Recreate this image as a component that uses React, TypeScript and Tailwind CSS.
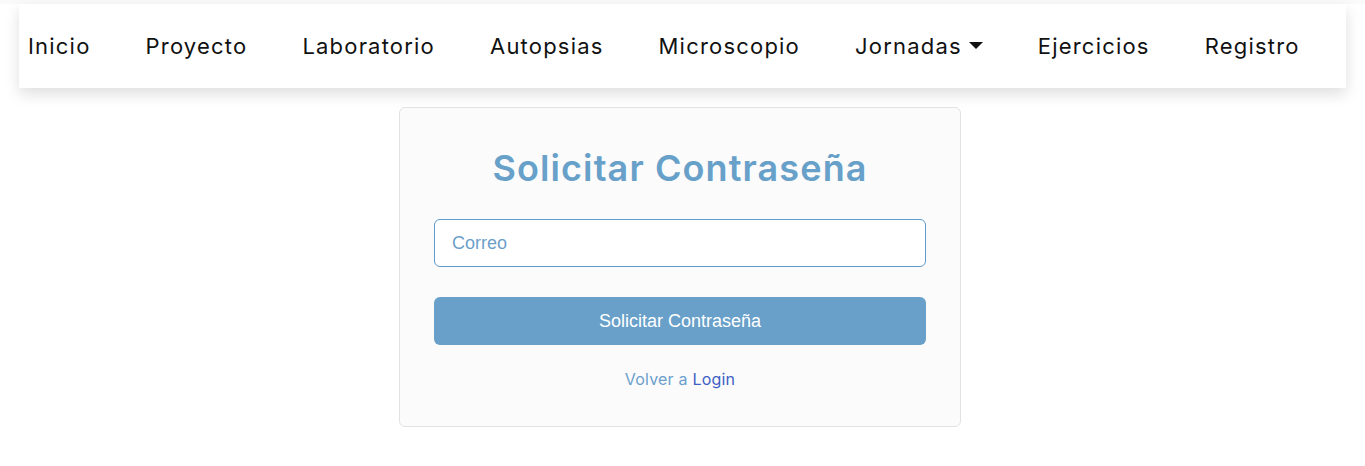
import React from "react";

const items = ["Inicio", "Proyecto", "Laboratorio", "Autopsias", "Microscopio", "Jornadas", "Ejercicios", "Registro"];

export default function App() {
  const poppins = { fontFamily: "Inter, 'Noto Sans', sans-serif" };
  return (
    <div className="min-h-[466px] w-full bg-white" style={poppins}>
      <div className="h-[4px] bg-[#fafafa]" />
      <div className="mx-[19px] flex h-[84px] items-center bg-white pl-[9px] shadow-[0_6px_14px_rgba(0,0,0,0.13)]">
        <ul className="flex items-center gap-[55px] text-[22px] tracking-[1.2px] text-[#111]">
          {items.map((it) => (
            <li key={it} className="flex items-center">
              {it}
              {it === "Jornadas" && (
                <svg width="14" height="8" viewBox="0 0 14 8" className="ml-[7px]">
                  <path d="M0 0 H14 L7 7 Z" fill="#111" />
                </svg>
              )}
            </li>
          ))}
        </ul>
      </div>
      <div className="mt-[19px] flex pl-[399px]">
        <div className="flex w-[562px] flex-col items-center rounded-[6px] border border-[#e2e2e2] bg-[#fbfbfb] px-[34px] pb-[35px] pt-[38px]">
          <h1 className="text-[36px] font-semibold leading-[44px] tracking-[1.1px] text-[#67a0c9]">Solicitar Contraseña</h1>
          <input
            placeholder="Correo"
            className="mt-[29px] h-[48px] w-full rounded-[6px] border border-[#5f9bcc] bg-white px-[17px] text-[18px] text-[#333] outline-none placeholder:text-[#6d9fca]"
            style={{ fontFamily: "'Liberation Sans', Arial, sans-serif" }}
          />
          <button
            className="mt-[30px] h-[48px] w-full rounded-[6px] bg-[#68a0c9] text-[18px] text-white"
            style={{ fontFamily: "'Liberation Sans', Arial, sans-serif" }}
          >
            Solicitar Contraseña
          </button>
          <p className="mt-[22px] text-[16px] tracking-[0.2px] text-[#6b9fcc]">
            Volver a <span className="text-[#3d5fc6]">Login</span>
          </p>
        </div>
      </div>
    </div>
  );
}
